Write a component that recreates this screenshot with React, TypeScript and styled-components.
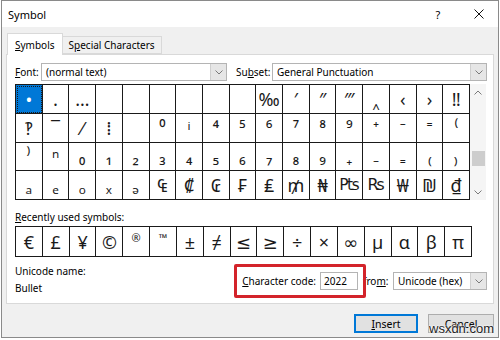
import React from "react";
import styled, { createGlobalStyle } from "styled-components";

const Global = createGlobalStyle`
  html, body { margin: 0; padding: 0; background: #ffffff; }
  body {
    font-family: "Noto Sans", "Liberation Sans", sans-serif;
    font-size: 10px;
    color: #000;
  }
  * { box-sizing: border-box; }
`;

const Window = styled.div`
  position: relative;
  width: 498px;
  height: 338px;
  margin-left: 1px;
  border: 1px solid #8a8a8a;
  background: #f0f0f0;
  display: flex;
  flex-direction: column;
`;

const TitleBar = styled.div`
  height: 26px;
  background: #ffffff;
  display: flex;
  align-items: center;
  padding: 0 14px 0 6px;
  font-size: 11px;
  flex-shrink: 0;
`;

const Title = styled.span`
  flex: 1;
`;

const TitleButton = styled.span<{ $gap: number }>`
  display: flex;
  align-items: center;
  justify-content: center;
  width: 10px;
  height: 12px;
  margin-left: ${(p) => p.$gap}px;
  font-size: 11px;
`;

const Body = styled.div`
  flex: 1;
  display: flex;
  flex-direction: column;
  padding: 6px 4px 0 4px;
`;

const TabStrip = styled.div`
  display: flex;
  align-items: flex-end;
  padding-left: 1px;
  height: 22px;
  position: relative;
  z-index: 1;
  margin-bottom: -1px;
`;

const Tab = styled.div<{ $active?: boolean }>`
  display: flex;
  align-items: center;
  justify-content: center;
  height: ${(p) => (p.$active ? 22 : 18)}px;
  padding: 0 ${(p) => (p.$active ? 7 : 6)}px;
  margin-bottom: ${(p) => (p.$active ? 0 : 1)}px;
  background: ${(p) => (p.$active ? "#ffffff" : "#f0f0f0")};
  border: 1px solid #d9d9d9;
  border-bottom: ${(p) => (p.$active ? "none" : "1px solid #d9d9d9")};
  border-left: ${(p) => (p.$active ? "1px solid #d9d9d9" : "none")};
`;

const U = styled.span`
  text-decoration: underline;
  text-underline-offset: 1px;
`;

const Panel = styled.div`
  height: 250px;
  background: #ffffff;
  border: 1px solid #d9d9d9;
  display: flex;
  flex-direction: column;
  padding: 8px 6px 0 8px;
`;

const FieldRow = styled.div`
  display: flex;
  align-items: center;
  height: 18px;
`;

const Label = styled.span<{ $w?: number; $ml?: number }>`
  display: inline-block;
  width: ${(p) => (p.$w ? `${p.$w}px` : "auto")};
  margin-left: ${(p) => p.$ml ?? 0}px;
  white-space: nowrap;
`;

const Combo = styled.div<{ $w: number }>`
  width: ${(p) => p.$w}px;
  height: 18px;
  border: 1px solid #b4b4b4;
  background: #ffffff;
  display: flex;
  align-items: stretch;
`;

const ComboText = styled.span`
  flex: 1;
  display: flex;
  align-items: center;
  padding-left: 4px;
  white-space: nowrap;
  overflow: hidden;
`;

const ComboButton = styled.span`
  width: 16px;
  background: #e6e6e6;
  border-left: 1px solid #cfcfcf;
  display: flex;
  align-items: center;
  justify-content: center;
`;

const GridArea = styled.div`
  display: flex;
  margin-top: 3px;
`;

const Grid = styled.div<{ $rows: number; $w: number; $h: number }>`
  width: ${(p) => p.$w}px;
  height: ${(p) => p.$h}px;
  display: grid;
  grid-template-columns: repeat(17, 1fr);
  grid-template-rows: repeat(${(p) => p.$rows}, 1fr);
  border-left: 1px solid #1a1a1a;
  border-top: 1px solid #1a1a1a;
`;

const Cell = styled.div<{ $selected?: boolean; $small?: boolean; $alt?: boolean }>`
  border-right: 1px solid #1a1a1a;
  border-bottom: 1px solid #1a1a1a;
  display: flex;
  align-items: center;
  justify-content: center;
  font-family: ${(p) =>
    p.$alt ? `"DejaVu Sans", sans-serif` : `"Noto Sans", "DejaVu Sans", sans-serif`};
  font-size: ${(p) => (p.$small ? 11 : p.$alt ? 16 : 18)}px;
  line-height: 1;
  padding-bottom: ${(p) => (p.$small ? 8 : 0)}px;
  color: ${(p) => (p.$selected ? "#ffffff" : "#1a1a1a")};
  background: ${(p) => (p.$selected ? "#0078d7" : "transparent")};
  outline: ${(p) => (p.$selected ? "1px dotted #1a1a1a" : "none")};
  outline-offset: -2px;
  overflow: hidden;
`;

const Scrollbar = styled.div`
  width: 16px;
  height: 116px;
  background: #f5f5f5;
  display: flex;
  flex-direction: column;
`;

const ScrollArrow = styled.div`
  height: 16px;
  display: flex;
  align-items: center;
  justify-content: center;
`;

const ScrollTrack = styled.div`
  flex: 1;
  display: flex;
  flex-direction: column;
  align-items: center;
`;

const Thumb = styled.div`
  width: 13px;
  height: 15px;
  background: #cdcdcd;
`;

const SectionLabel = styled.div`
  margin-top: 10px;
  height: 14px;
  line-height: 14px;
`;

const RecentWrap = styled.div`
  margin-top: 2px;
`;

const InfoRow = styled.div`
  display: flex;
  margin-top: 7px;
`;

const NameBlock = styled.div`
  display: flex;
  flex-direction: column;
  gap: 3px;
  line-height: 14px;
  flex: 1;
`;

const CodeRow = styled.div`
  position: relative;
  display: flex;
  align-items: center;
  height: 18px;
  margin-top: 8px;
`;

const CodeInput = styled.div`
  width: 38px;
  height: 18px;
  border: 1px solid #b4b4b4;
  background: #fff;
  display: flex;
  align-items: center;
  padding-left: 3px;
  margin-left: 4px;
`;

const Highlight = styled.div`
  position: absolute;
  left: -8px;
  top: -8px;
  width: 132px;
  height: 34px;
  border: 3px solid #d3232a;
  border-radius: 2px;
  pointer-events: none;
`;

const ButtonRow = styled.div`
  display: flex;
  justify-content: flex-end;
  gap: 10px;
  margin-top: 10px;
`;

const Button = styled.div<{ $default?: boolean; $w: number }>`
  width: ${(p) => p.$w}px;
  height: 19px;
  background: #e1e1e1;
  border: 1px solid ${(p) => (p.$default ? "#0078d7" : "#adadad")};
  box-shadow: ${(p) => (p.$default ? "inset 0 0 0 1px #0078d7" : "none")};
  display: flex;
  align-items: center;
  justify-content: center;
  font-size: 10.5px;
`;

const Watermark = styled.div`
  position: absolute;
  left: 427px;
  top: 320px;
  font-family: "Liberation Sans", Arial, sans-serif;
  font-size: 13px;
  color: #222;
  text-shadow: 0 0 2px #fff, 0 0 2px #fff, 0 0 1px #fff;
  pointer-events: none;
`;

const Chevron = ({ up }: { up?: boolean }) => (
  <svg width="8" height="5" viewBox="0 0 8 5">
    <path
      d={up ? "M0.5 4.5 L4 1 L7.5 4.5" : "M0.5 0.5 L4 4 L7.5 0.5"}
      fill="none"
      stroke="#7a7a7a"
      strokeWidth="1"
    />
  </svg>
);

const CloseIcon = () => (
  <svg width="10" height="10" viewBox="0 0 10 10">
    <path d="M0.5 0.5 L9.5 9.5 M9.5 0.5 L0.5 9.5" stroke="#111" strokeWidth="1" />
  </svg>
);

const rows: string[][] = [
  ["•", "․", "…", "", "", "", "", "", "", "‰", "′", "″", "‴", "‸", "‹", "›", "‼"],
  ["‽", "‾", "⁄", "⁞", "", "⁰", "ⁱ", "⁴", "⁵", "⁶", "⁷", "⁸", "⁹", "⁺", "⁻", "⁼", "⁽"],
  ["⁾", "ⁿ", "₀", "₁", "₂", "₃", "₄", "₅", "₆", "₇", "₈", "₉", "₊", "₋", "₌", "₍", "₎"],
  ["ₐ", "ₑ", "ₒ", "ₓ", "ₔ", "₠", "₡", "₢", "₣", "₤", "₥", "₦", "₧", "₨", "₩", "₪", "₫"],
];

const recent = ["€", "£", "¥", "©", "®", "™", "±", "≠", "≤", "≥", "÷", "×", "∞", "µ", "α", "β", "π"];

export default function App() {
  return (
    <>
      <Global />
      <Window>
        <TitleBar>
          <Title>Symbol</Title>
          <TitleButton $gap={0}>?</TitleButton>
          <TitleButton $gap={31}>
            <CloseIcon />
          </TitleButton>
        </TitleBar>
        <Body>
          <TabStrip>
            <Tab $active>
              <span>
                <U>S</U>ymbols
              </span>
            </Tab>
            <Tab>
              <span>
                S<U>p</U>ecial Characters
              </span>
            </Tab>
          </TabStrip>
          <Panel>
            <FieldRow>
              <Label $w={26}>
                <U>F</U>ont:
              </Label>
              <Combo $w={186}>
                <ComboText>(normal text)</ComboText>
                <ComboButton>
                  <Chevron />
                </ComboButton>
              </Combo>
              <Label $w={36} $ml={9}>
                Su<U>b</U>set:
              </Label>
              <Combo $w={215}>
                <ComboText>General Punctuation</ComboText>
                <ComboButton>
                  <Chevron />
                </ComboButton>
              </Combo>
            </FieldRow>
            <GridArea>
              <Grid $rows={4} $w={455} $h={116}>
                {rows.flatMap((r, ri) =>
                  r.map((c, ci) => (
                    <Cell
                      key={`${ri}-${ci}`}
                      $selected={ri === 0 && ci === 0}
                      $alt={c === "₧" || c === "₨"}
                    >
                      {c}
                    </Cell>
                  ))
                )}
              </Grid>
              <Scrollbar>
                <ScrollArrow>
                  <Chevron up />
                </ScrollArrow>
                <ScrollTrack>
                  <Thumb style={{ marginTop: 51 }} />
                </ScrollTrack>
                <ScrollArrow>
                  <Chevron />
                </ScrollArrow>
              </Scrollbar>
            </GridArea>
            <SectionLabel>
              <U>R</U>ecently used symbols:
            </SectionLabel>
            <RecentWrap>
              <Grid $rows={1} $w={457} $h={31}>
                {recent.map((c, i) => (
                  <Cell key={i} $small={c === "®" || c === "™"}>
                    {c}
                  </Cell>
                ))}
              </Grid>
            </RecentWrap>
            <InfoRow>
              <NameBlock>
                <span>Unicode name:</span>
                <span>Bullet</span>
              </NameBlock>
              <CodeRow>
                <Label>
                  <U>C</U>haracter code:
                </Label>
                <CodeInput>2022</CodeInput>
                <Label $w={30} $ml={5}>
                  fro<U>m</U>:
                </Label>
                <Combo $w={94}>
                  <ComboText>Unicode (hex)</ComboText>
                  <ComboButton>
                    <Chevron />
                  </ComboButton>
                </Combo>
                <Highlight />
              </CodeRow>
            </InfoRow>
          </Panel>
          <ButtonRow>
            <Button $default $w={64}>
              <span>
                <U>I</U>nsert
              </span>
            </Button>
            <Button $w={66}>Cancel</Button>
          </ButtonRow>
        </Body>
        <Watermark>wsxdn.com</Watermark>
      </Window>
    </>
  );
}
